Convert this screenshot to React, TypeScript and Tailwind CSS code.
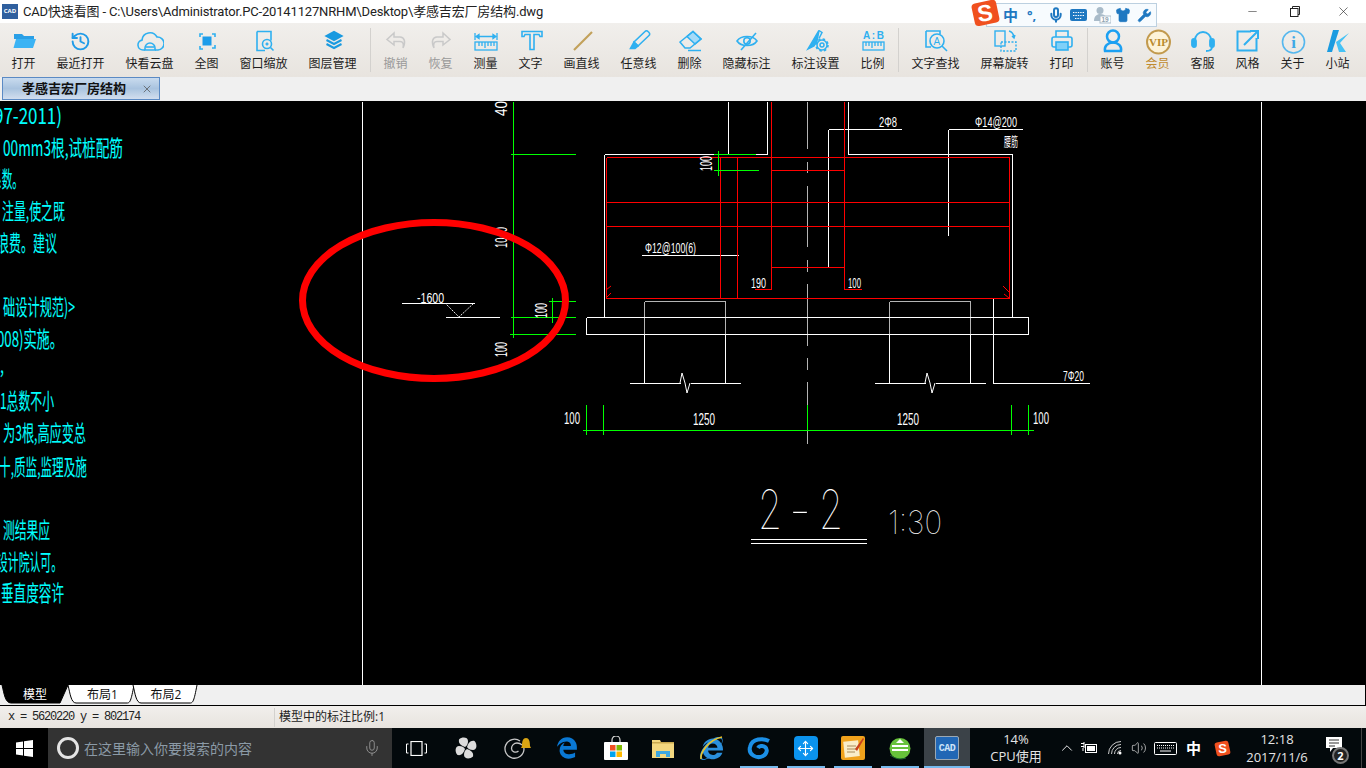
import React from "react";
import { History, Mic, Move, Shirt, Wrench, X, Minus, ChevronUp, Volume2 } from "lucide-react";
import { FaEdgeLegacy, FaInternetExplorer } from "react-icons/fa";

const BLUE = "#2fb0f0";

function Ic({ children, color = BLUE, width = 1.6 }: { children: React.ReactNode; color?: string; width?: number }) {
  return (
    <svg width={28} height={28} viewBox="0 0 28 28" fill="none" stroke={color} strokeWidth={width}>
      {children}
    </svg>
  );
}

const undoPath = "M12 6 L5 12.5 L12 18 V14.5 H18 C21 14.5 22 17 21 21 C24 15 22.5 10 18 10 H12 Z";
const ticks = "M7 19v-4M10 19v-4M13 21v-6M16 19v-4M19 19v-4M22 19v-4";

const tools: { label: string; w: number; color?: string; icon: React.ReactNode }[] = [
  {
    label: "打开",
    w: 45,
    icon: (
      <Ic>
        <path d="M4 7h8l2 2h10v3H4z" fill="#2a9fe6" stroke="none" />
        <path d="M6 12h20l-3 9H3.5z" fill="#3bb3f4" stroke="none" />
      </Ic>
    ),
  },
  {
    label: "最近打开",
    w: 69,
    icon: <div className="flex h-7 w-7 items-center justify-center"><History size={21} color="#1f9be8" strokeWidth={2.2} /></div>,
  },
  {
    label: "快看云盘",
    w: 69,
    icon: (
      <Ic>
        <path d="M9 23H7a5 5 0 0 1-1-9.9A8 8 0 0 1 21 10a6 6 0 0 1 1 13h-3" />
        <path d="M9 23v-2a5 5 0 0 1 10 0v2z" />
        <path d="M10 20h8" />
      </Ic>
    ),
  },
  {
    label: "全图",
    w: 45,
    icon: (
      <Ic>
        <rect x="9.5" y="9.5" width="9" height="9" fill="#1c9cea" stroke="none" />
        <path d="M7 10V7h3M19 7h3v3M22 18v3h-3M10 22H7v-3" />
      </Ic>
    ),
  },
  {
    label: "窗口缩放",
    w: 69,
    icon: (
      <Ic>
        <path d="M7 4.5h14v9M7 4.5v19h8" />
        <circle cx="17" cy="17" r="4.5" />
        <path d="M20.5 20.5l3 3M15.5 17h3M17 15.5v3" />
      </Ic>
    ),
  },
  {
    label: "图层管理",
    w: 69,
    icon: (
      <Ic color="#1a9ae0" width={2}>
        <path d="M15 5l7.5 4-7.5 4-7.5-4z" fill="#1a9ae0" />
        <path d="M7.5 13l7.5 4 7.5-4M7.5 17l7.5 4 7.5-4" />
      </Ic>
    ),
  },
  { label: "sep", w: 6, icon: null },
  {
    label: "撤销",
    w: 45,
    color: "#999",
    icon: (
      <Ic color="#c9c9c9" width={1.5}>
        <path d={undoPath} />
      </Ic>
    ),
  },
  {
    label: "恢复",
    w: 45,
    color: "#999",
    icon: (
      <Ic color="#c9c9c9" width={1.5}>
        <path d={undoPath} transform="translate(28) scale(-1 1)" />
      </Ic>
    ),
  },
  {
    label: "测量",
    w: 45,
    icon: (
      <Ic width={1.3}>
        <path d="M3 6v7M25 6v7M5 9.5h18" />
        <path d="M4 9.5l3-2v4zM24 9.5l-3-2v4z" fill={BLUE} />
        <rect x="3" y="15" width="22" height="8" />
        <path d={ticks} />
      </Ic>
    ),
  },
  {
    label: "文字",
    w: 45,
    icon: (
      <Ic>
        <path d="M5 4.5h20v5h-2l-1-2h-5v15h-4v-15H8l-1 2H5z" />
      </Ic>
    ),
  },
  {
    label: "画直线",
    w: 57,
    icon: (
      <Ic color="#c2a15a" width={2.2}>
        <path d="M6 23L24 5" />
      </Ic>
    ),
  },
  {
    label: "任意线",
    w: 57,
    icon: (
      <Ic>
        <path d="M20 4.5a2 2 0 0 1 3 0l1 1a2 2 0 0 1 0 3L13 19l-4-4z" />
        <path d="M9 15l4 4-3 2.5H5.5z" fill={BLUE} />
      </Ic>
    ),
  },
  {
    label: "删除",
    w: 45,
    icon: (
      <Ic width={1.5}>
        <path d="M17 4.5L25 12L19 17L11 9.5z" fill="#a5dbf8" />
        <path d="M17 4.5L25 12L14 21H9L4 15z" />
        <path d="M12 23.5H25" />
      </Ic>
    ),
  },
  {
    label: "隐藏标注",
    w: 69,
    icon: (
      <Ic>
        <path d="M4 14C8 8 20 8 24 14C20 20 8 20 4 14z" />
        <circle cx="14" cy="14" r="3.2" />
        <path d="M8 23L23 6" />
      </Ic>
    ),
  },
  {
    label: "标注设置",
    w: 69,
    icon: (
      <Ic width={1.5}>
        <path d="M17 3.5L6 22l6-3 3-5z" fill={BLUE} />
        <path d="M17 3.5l3 2-3 6" />
        <circle cx="20" cy="18" r="2" />
        <circle cx="20" cy="18" r="5" />
        <circle cx="20" cy="18" r="6" strokeWidth={1.6} strokeDasharray="2.5 2.2" />
      </Ic>
    ),
  },
  {
    label: "比例",
    w: 45,
    icon: (
      <Ic width={1.3}>
        <text x="4" y="12" fontSize="10" fontWeight="700" fill={BLUE} stroke="none" textLength="21" lengthAdjust="spacing" fontFamily="Liberation Sans">A:B</text>
        <rect x="4" y="15" width="21" height="8" />
        <path d={ticks} />
      </Ic>
    ),
  },
  { label: "sep", w: 6, icon: null },
  {
    label: "文字查找",
    w: 69,
    icon: (
      <Ic>
        <path d="M4 4h14v3M4 4v16h5" />
        <circle cx="15" cy="14" r="7" />
        <text x="11.5" y="17.5" fontSize="10" fill={BLUE} stroke="none" fontFamily="Liberation Sans">A</text>
        <path d="M20 19l5 5" />
      </Ic>
    ),
  },
  {
    label: "屏幕旋转",
    w: 69,
    icon: (
      <Ic width={1.4}>
        <rect x="4" y="4" width="10" height="15" />
        <rect x="10" y="15" width="15" height="9" strokeDasharray="2 1.5" />
        <path d="M18 4q4 1 5 6M21 9l2 2 1-3" />
      </Ic>
    ),
  },
  {
    label: "打印",
    w: 45,
    icon: (
      <Ic>
        <path d="M8 10V4h12v6" />
        <rect x="4" y="10" width="20" height="10" rx="2" />
        <rect x="8" y="15" width="12" height="8" fill="#7fd0f8" />
      </Ic>
    ),
  },
  { label: "sep", w: 6, icon: null },
  {
    label: "账号",
    w: 45,
    icon: (
      <Ic color="#1ca0f2" width={2.5}>
        <circle cx="14" cy="9.5" r="6" />
        <path d="M6 24c-1-5 3-8.500 8-8.500s9 3.500 8 8.500z" />
      </Ic>
    ),
  },
  {
    label: "会员",
    w: 45,
    color: "#c08a2e",
    icon: (
      <Ic color="#c29a4e" width={2}>
        <circle cx="14.500" cy="15" r="11.500" fill="#fdf3d8" />
        <text x="5" y="19" fontSize="11" fontWeight="700" fill="#b98a2d" stroke="none" textLength="19" lengthAdjust="spacingAndGlyphs" fontFamily="Liberation Serif">VIP</text>
      </Ic>
    ),
  },
  {
    label: "客服",
    w: 45,
    icon: (
      <Ic width={1.8}>
        <path d="M6 13a8 8 0 0 1 16 0" />
        <rect x="3" y="12" width="4" height="8" rx="2" fill={BLUE} />
        <rect x="21" y="12" width="4" height="8" rx="2" fill={BLUE} />
        <path d="M23 20q0 4-6 4" />
      </Ic>
    ),
  },
  {
    label: "风格",
    w: 45,
    icon: (
      <Ic width={2}>
        <path d="M17 4.500H3.500v19h19V11" />
        <path d="M10 18L24 4M16 4h8v8" />
      </Ic>
    ),
  },
  {
    label: "关于",
    w: 45,
    icon: (
      <Ic color="#55b7ee">
        <circle cx="14.500" cy="15" r="11" />
        <text x="14.500" y="21" textAnchor="middle" fontSize="17" fontWeight="700" fill="#3fa9e6" stroke="none" fontFamily="Liberation Serif">i</text>
      </Ic>
    ),
  },
  {
    label: "小站",
    w: 45,
    icon: (
      <Ic>
        <path d="M9 3h6L8 25H3z" fill="#1b9be0" stroke="none" />
        <path d="M12 15L25 6 16 16l6 9h-7z" fill="#45c2f5" stroke="none" />
      </Ic>
    ),
  },
];

function TitleBar() {
  return (
    <div className="relative flex h-[23px] items-center bg-white pl-[2px] text-[#222]">
      <div className="flex h-[15px] w-[16px] items-center justify-center bg-[#2f5f9e] text-[6px] font-bold text-white">CAD</div>
      <span className="ml-[5px] whitespace-nowrap font-['Roboto','Noto_Sans_CJK_SC',sans-serif] text-[13px] tracking-[-0.16px]">CAD快速看图 - C:\Users\Administrator.PC-20141127NRHM\Desktop\孝感吉宏厂房结构.dwg</span>
      <div className="ml-auto flex items-center text-[#222]">
        <div className="flex w-[45px] justify-center"><Minus size={13} strokeWidth={1} /></div>
        <div className="flex w-[46px] justify-center pr-[6px]">
          <svg width={10} height={11} viewBox="0 0 10 11" fill="none" stroke="#222">
            <rect x=".5" y="2.500" width="7.500" height="8" />
            <path d="M2.500 2.500V.5h7v8H8" />
          </svg>
        </div>
        <div className="flex w-[45px] justify-center pr-[1px]"><X size={15} strokeWidth={1} /></div>
      </div>
      <ImeBar />
    </div>
  );
}

function ImeBar() {
  return (
    <div className="absolute left-[971px] top-0 z-10 flex h-[28px] items-start">
      <svg width={29} height={27} viewBox="0 0 29 27" className="relative z-10">
        <rect x="2" y="1.500" width="25" height="23" rx="4" fill="#f0501e" transform="rotate(-12 14 13)" />
        <text x="14" y="21" textAnchor="middle" fontSize="23" fontWeight="700" fill="#fff" fontFamily="Liberation Sans" transform="rotate(-8 14 13)">S</text>
      </svg>
      <div className="ml-[-14px] mt-[3px] flex h-[24px] w-[171px] items-center border border-[#bcd0e0] bg-[#f7fbfe] pl-[16px] text-[#1f78c1]">
        <span className="w-[19px] text-[15px] font-bold leading-none">中</span>
        <span className="ml-[5px] w-[20px] text-[13px] font-bold leading-none">°,</span>
        <Mic size={16} strokeWidth={3} className="ml-[1px]" />
        <svg width={18} height={13} viewBox="0 0 18 13" className="ml-[6px]">
          <rect width="17" height="12" rx="2" fill="#1f78c1" />
          <path d="M3 3.500h11M3 6.500h11M5 9.500h7" stroke="#fff" strokeWidth="1.200" strokeDasharray="1.400 1" />
        </svg>
        <svg width={17} height={18} viewBox="0 0 17 18" className="ml-[6px]">
          <circle cx="6" cy="4.500" r="3.500" fill="#a9bbc9" />
          <path d="M0 15c0-5 3-7 6-7s5 1 6 3v4z" fill="#a9bbc9" />
          <rect x="6" y="10" width="11" height="7" fill="#fff" stroke="#a9bbc9" />
          <text x="7.500" y="16" fontSize="6.500" fontWeight="700" fill="#8fa3b2" fontFamily="Liberation Sans">19</text>
        </svg>
        <Shirt size={16} fill="#1f78c1" strokeWidth={1} className="ml-[4px]" />
        <Wrench size={15} fill="#1f78c1" strokeWidth={1} className="ml-[6px]" />
      </div>
    </div>
  );
}

function Toolbar() {
  return (
    <div className="flex h-[54px] bg-gradient-to-b from-[#f1efec] to-[#e8e4df] pl-px">
      {tools.map((t, i) =>
        t.label === "sep" ? (
          <div key={i} className="flex w-[6px] shrink-0 justify-center pt-[5px]">
            <div className="h-[44px] w-px bg-[#d3d1ce]" />
          </div>
        ) : (
          <div key={i} style={{ width: t.w, color: t.color }} className="flex shrink-0 flex-col items-center pt-[4px] text-[#1e1e1e]">
            {t.icon}
            <span className="mt-px whitespace-nowrap text-[12px] leading-[16px]">{t.label}</span>
          </div>
        )
      )}
    </div>
  );
}

function DocTabs() {
  return (
    <div className="flex h-[24px] bg-[#f0f0f0] pl-[2px]">
      <div className="flex h-[23px] w-[158px] items-center border border-[#5b8ac4] bg-gradient-to-b from-[#c9dbee] via-[#a9c3df] to-[#d2deee] pl-[19px]">
        <span className="text-[13px] font-bold text-[#111]">孝感吉宏厂房结构</span>
        <X size={12} color="#555" strokeWidth={1.5} className="ml-[15px]" />
      </div>
    </div>
  );
}

type Seg = [number, number, number, number];

const white: Seg[] = [
  [362, 101, 362, 685], [1261, 101, 1261, 685],
  [728, 101, 728, 154], [767, 101, 767, 154], [604, 154, 767, 154], [604, 154, 604, 317],
  [848, 101, 848, 154], [848, 154, 1012, 154], [1012, 154, 1012, 317],
  [586, 317, 1028, 317], [586, 334, 1028, 334], [586, 317, 586, 334], [1028, 317, 1028, 334],
  [401, 303, 474, 303], [445, 317, 499, 317],
  [641, 255, 738, 255], [828, 129, 901, 129], [828, 129, 828, 267], [948, 129, 1022, 129], [948, 129, 948, 235],
  [644, 334, 644, 383], [725, 334, 725, 383], [889, 334, 889, 383], [970, 334, 970, 383],
  [629, 383, 680, 383], [690, 383, 740, 383], [874, 383, 925, 383], [935, 383, 985, 383],
  [993, 298, 993, 383], [993, 383, 1089, 383],
  [750, 539, 866, 539], [750, 543, 866, 543],
];

const gray: Seg[] = [
  [644, 301, 725, 301], [644, 301, 644, 334], [725, 301, 725, 334],
  [889, 301, 970, 301], [889, 301, 889, 334], [970, 301, 970, 334],
  [807, 101, 807, 148], [807, 161, 807, 172], [807, 185, 807, 246], [807, 259, 807, 271],
  [807, 283, 807, 345], [807, 357, 807, 369], [807, 381, 807, 443],
];

const red: Seg[] = [
  [606, 157, 1009, 157], [606, 157, 606, 298], [1009, 157, 1009, 298], [606, 298, 1009, 298],
  [606, 202, 1009, 202], [606, 226, 1009, 226], [720, 157, 720, 298], [737, 157, 737, 298],
  [771, 101, 771, 289], [844, 101, 844, 289], [771, 170, 844, 170], [771, 267, 844, 267],
  [754, 289, 771, 289], [844, 289, 861, 289],
];

const green: Seg[] = [
  [513, 101, 513, 337], [510, 154, 575, 154], [510, 317, 575, 317], [509, 334, 575, 334],
  [552, 297, 552, 322], [548, 301, 575, 301], [713, 154, 755, 154], [713, 170, 758, 170], [718, 150, 718, 175],
  [582, 430, 1033, 430], [586, 404, 586, 434], [603, 404, 603, 434], [807, 404, 807, 430], [1011, 404, 1011, 434], [1028, 404, 1028, 434],
];

function Lines({ segs, color }: { segs: Seg[]; color: string }) {
  return (
    <g stroke={color} strokeWidth={1} shapeRendering="crispEdges">
      {segs.map((s, i) => (
        <line key={i} x1={s[0] + 0.5} y1={s[1] + 0.5} x2={s[2] + 0.5} y2={s[3] + 0.5} />
      ))}
    </g>
  );
}

// dimension text, squeezed like the CAD line font
function Dim({ x, y, len, size = 14, rot, children }: { x: number; y: number; len: number; size?: number; rot?: boolean; children: string }) {
  return (
    <text
      x={x}
      y={y}
      fontSize={size}
      fill="#fff"
      fontFamily="Liberation Sans"
      textLength={len}
      lengthAdjust="spacingAndGlyphs"
      transform={rot ? `rotate(-90 ${x} ${y})` : undefined}
    >
      {children}
    </text>
  );
}

const notes: [string, number, number, number][] = [
  ["97-2011)", -6, 124, 68],
  ["00mm3根,试桩配筋", 3, 156, 120],
  ["系数。", -9, 187, 32],
  ["注量,使之既", 2, 219, 63],
  ["浪费。建议", -3, 251, 60],
  ["础设计规范)>", 3, 315, 72],
  ["008)实施。", -3, 347, 66],
  [",", 0, 373, 4],
  ["1总数不小", 0, 409, 54],
  ["为3根,高应变总", 3, 441, 83],
  ["十,质监,监理及施", -1, 475, 88],
  ["测结果应", 3, 538, 47],
  ["设计院认可。", -3, 570, 65],
  ["垂直度容许", 1, 601, 63],
];

function Drawing() {
  return (
    <div className="h-[584px] bg-black">
      <svg className="block h-full w-full" viewBox="0 101 1366 584" fill="none">
        {notes.map(([t, x, y, len], i) => (
          <text key={i} x={x} y={y} fontSize="22" fill="#00ffff" stroke="#00ffff" strokeWidth="0.08" fontFamily="Noto Sans CJK SC" textLength={len} lengthAdjust="spacingAndGlyphs">
            {t}
          </text>
        ))}
        <Lines segs={gray} color="#b4b4b4" />
        <Lines segs={white} color="#fff" />
        <Lines segs={red} color="#ff0000" />
        <Lines segs={green} color="#00ff00" />
        <path d="M445 303L459 317L474 303" stroke="#fff" strokeDasharray="1.500 1" />
        <path d="M680 383L682 373L685 383L687 393L690 383M925 383L927 373L930 383L932 393L935 383" stroke="#fff" />
        <path d="M606 290l5-4M606 298l5-5M1009 292l-6-6M1009 298l-5-4" stroke="#ff0000" />
        <Dim x={417} y={303} len={27} size={14}>-1600</Dim>
        <Dim x={645} y={253} len={51} size={14}>Φ12@100(6)</Dim>
        <Dim x={751} y={288} len={15} size={15}>190</Dim>
        <Dim x={848} y={288} len={13} size={15}>100</Dim>
        <Dim x={879} y={127} len={18} size={14}>2Φ8</Dim>
        <Dim x={975} y={127} len={42} size={14}>Φ14@200</Dim>
        <text x={1004} y={146} fontSize="13" fill="#fff" fontFamily="Noto Sans CJK SC" textLength="14" lengthAdjust="spacingAndGlyphs">腰筋</text>
        <Dim x={1063} y={381} len={21} size={15}>7Φ20</Dim>
        <Dim x={564} y={424} len={16} size={17}>100</Dim>
        <Dim x={1033} y={424} len={16} size={17}>100</Dim>
        <Dim x={693} y={425} len={22} size={17}>1250</Dim>
        <Dim x={897} y={425} len={22} size={17}>1250</Dim>
        <Dim x={712} y={171} len={15} size={16} rot>100</Dim>
        <Dim x={507} y={116} len={15} size={16} rot>40</Dim>
        <Dim x={507} y={248} len={21} size={16} rot>1040</Dim>
        <Dim x={547} y={318} len={15} size={17} rot>100</Dim>
        <Dim x={507} y={357} len={15} size={17} rot>100</Dim>
        <g fill="#fff" fontFamily="Inter" fontWeight="100">
          <text x="758" y="529" fontSize="54" textLength="24" lengthAdjust="spacingAndGlyphs">2</text>
          <text x="789" y="529" fontSize="54" textLength="22" lengthAdjust="spacingAndGlyphs">-</text>
          <text x="819" y="529" fontSize="54" textLength="24" lengthAdjust="spacingAndGlyphs">2</text>
          <text x="888" y="534" fontSize="32" textLength="54" lengthAdjust="spacingAndGlyphs">1:30</text>
        </g>
        <ellipse cx="434" cy="300.500" rx="131.500" ry="78" stroke="#ff0000" strokeWidth="7" />
      </svg>
    </div>
  );
}

function SheetTab({ label, w, d, fill, color, text, ml, pl = 0 }: { label: string; w: number; d: string; fill: string; color: string; text: string; ml: number; pl?: number }) {
  return (
    <div style={{ width: w, marginLeft: ml, paddingLeft: pl }} className="relative flex h-[19px] items-center justify-center">
      <svg width={w} height={19} viewBox={`0 0 ${w} 19`} className="absolute left-0 top-0">
        <path d={d} fill={fill} stroke={color} />
      </svg>
      <span style={{ color: text }} className="relative text-[12px]">{label}</span>
    </div>
  );
}

function SheetTabs() {
  return (
    <div className="flex h-[21px] border-r border-b border-black bg-[#f0f0f0] pl-px">
      <SheetTab label="模型" w={68} ml={0} fill="#000" color="#000" text="#fff" d="M1 0C3 8 4 18 10 18H59L67 0Z" />
      <SheetTab label="布局1" w={68} ml={-2} pl={3} fill="#fff" color="#000" text="#111" d="M1 0C3 8 4 18 9 18H60C63 18 64 16 67 0" />
      <SheetTab label="布局2" w={66} ml={-3} pl={2} fill="#fff" color="#000" text="#111" d="M1 0C3 8 4 18 9 18H58C61 18 62 16 65 0" />
    </div>
  );
}

function StatusBar() {
  return (
    <div className="flex h-[22px] items-center bg-gradient-to-b from-[#f1efec] to-[#e8e4df] text-[#222]">
      <span className="w-[274px] whitespace-pre pl-[8px] font-['Liberation_Mono',monospace] text-[12px] tracking-[-1.2px]">x = 5620220 y = 802174</span>
      <div className="h-[19px] w-px bg-[#d3d1ce]" />
      <span className="pl-[4px] text-[12px]">模型中的标注比例:1</span>
    </div>
  );
}

function AppSlot({ w, on, children }: { w: number; on?: boolean; children: React.ReactNode }) {
  return (
    <div style={{ width: w }} className="flex h-full shrink-0 justify-center">
      <div className={`flex h-full w-[38px] items-center justify-center ${on ? "border-b-2 border-[#76b9ed] pt-[2px]" : ""}`}>{children}</div>
    </div>
  );
}

function Taskbar() {
  return (
    <div className="flex h-[40px] items-center bg-[#03090c] text-white">
      <div className="flex h-full w-[48px] items-center justify-center bg-black">
        <svg width={17} height={17} viewBox="0 0 17 17" fill="#fff">
          <path d="M0 2.500l7-1v6.500H0zM8 1.300l9-1.300v8H8zM0 9h7v6.500l-7-1zM8 9h9v8l-9-1.300z" />
        </svg>
      </div>
      <div className="flex h-full w-[344px] items-center bg-[#333] pl-[9px]">
        <div className="h-[22px] w-[22px] rounded-full border-[3px] border-[#e4e4e4]" />
        <span className="ml-[5px] text-[14px] text-[#8b9aa6]">在这里输入你要搜索的内容</span>
        <Mic size={18} color="#8f8f8f" strokeWidth={1.300} className="ml-[111px]" />
      </div>
      <AppSlot w={48}>
        <svg width={21} height={15} viewBox="0 0 21 15" fill="none" stroke="#fff">
          <rect x="5" y="0.500" width="11" height="14" strokeWidth="1.200" />
          <path d="M2.500 3H.5v9h2M18.500 3h2v9h-2" />
        </svg>
      </AppSlot>
      <AppSlot w={51}>
        <svg width={24} height={24} viewBox="0 0 24 24" fill="#dcdcdc">
          {[0, 90, 180, 270].map((r) => (
            <path key={r} transform={`rotate(${r} 12 12)`} d="M11 11C8 10 4 8 5 3.500C8 .5 14 1 14 5C14 8 13 10 11 11z" />
          ))}
        </svg>
      </AppSlot>
      <AppSlot w={51}>
        <svg width={30} height={28} viewBox="0 0 30 28" fill="none" stroke="#c8c8c8" strokeWidth="1.300">
          <path d="M18 7a9.500 9.500 0 1 0 4 8c0-3-3-6-7-6a5.500 5.500 0 0 0-5.500 5.500c0 3 4 5 7 2.500" />
          <path d="M20 12c0-5 1-8 4-8s4 3 4 8l1 2h-10z" fill="#d9a514" stroke="none" />
        </svg>
      </AppSlot>
      <AppSlot w={50}><FaEdgeLegacy size={22} color="#0a78d4" /></AppSlot>
      <AppSlot w={47}>
        <svg width={24} height={24} viewBox="0 0 24 24">
          <path d="M8 6V4a4 4 0 0 1 8 0v2" fill="none" stroke="#ddd" strokeWidth="1.200" />
          <rect y="6" width="24" height="18" rx="1" fill="#fff" />
          <rect x="6" y="9" width="5.500" height="5.500" fill="#f25022" />
          <rect x="12.500" y="9" width="5.500" height="5.500" fill="#7fba00" />
          <rect x="6" y="15.500" width="5.500" height="5.500" fill="#00a4ef" />
          <rect x="12.500" y="15.500" width="5.500" height="5.500" fill="#ffb900" />
        </svg>
      </AppSlot>
      <AppSlot w={48}>
        <svg width={22} height={19} viewBox="0 0 22 19">
          <path d="M0 1h8l1 2h13v16H0z" fill="#f3d77f" />
          <path d="M0 3h22v1.500H0z" fill="#c9a84f" />
          <path d="M4 18v-6h14v6h-4v-3H8v3z" fill="#3ea7e0" />
        </svg>
      </AppSlot>
      <AppSlot w={48}>
        <div className="relative flex items-center justify-center">
          <FaInternetExplorer size={23} color="#2a8fdc" />
          <svg width={26} height={26} viewBox="0 0 26 26" fill="none" stroke="#e8c22c" strokeWidth="1.600" className="absolute left-[-2px] top-[-2px]">
            <path d="M3 24C2 18 10 5 24 2" />
          </svg>
        </div>
      </AppSlot>
      <AppSlot w={47} on>
        <svg width={24} height={24} viewBox="0 0 24 24" fill="none">
          <path d="M22 5C16 2 5 2 3 11c-2 8 7 12 13 9 4-2 5-7 2-9-2-2-6-1-7 1" stroke="#1b8fe6" strokeWidth="4" />
        </svg>
      </AppSlot>
      <AppSlot w={47} on>
        <div className="flex h-[24px] w-[24px] items-center justify-center rounded-[4px] bg-[#0b93ee]">
          <Move size={17} color="#fff" strokeWidth={1.600} />
        </div>
      </AppSlot>
      <AppSlot w={47} on>
        <svg width={24} height={24} viewBox="0 0 24 24">
          <rect width="24" height="24" rx="2" fill="#f0a21c" />
          <rect x="3" y="5" width="15" height="16" fill="#f9edc9" transform="rotate(-6 10 13)" />
          <path d="M6 10h9M6 13h9M6 16h8" stroke="#a78a5a" />
          <path d="M14 13L22 2l1 1-7 12z" fill="#c8401c" />
        </svg>
      </AppSlot>
      <AppSlot w={48} on>
        <svg width={22} height={23} viewBox="0 0 22 23">
          <circle cx="11" cy="11.500" r="10.500" fill="#67c23a" />
          <path d="M3 9h16M3 13h16" stroke="#fff" strokeWidth="2" />
          <path d="M7 6l4-4 4 4z" fill="#fff" />
          <path d="M1 18q8 6 16 3" stroke="#1d6a2b" fill="none" />
        </svg>
      </AppSlot>
      <div className="flex h-full w-[46px] shrink-0 items-center justify-center border-b-2 border-[#76b9ed] bg-[#3b4248] pt-[2px]">
        <div className="flex h-[24px] w-[24px] items-center justify-center rounded-[2px] border border-[#9aa8b4] bg-[#2167b5] font-['Liberation_Mono',monospace] text-[10px] font-bold tracking-[-0.5px] text-[#cfe4f8]">CAD</div>
      </div>
      <div className="ml-[4px] flex w-[84px] shrink-0 flex-col items-center text-[13px] leading-[17px] text-[#e4e4e4]">
        <span>14%</span>
        <span>CPU使用</span>
      </div>
      <div className="flex w-[18px] justify-center"><ChevronUp size={20} strokeWidth={1.200} /></div>
      <div className="flex w-[27px] justify-center">
        <svg width={17} height={12} viewBox="0 0 17 12" fill="none" stroke="#fff">
          <rect x="4.500" y="2.500" width="11" height="8" />
          <rect x="6" y="4" width="8" height="5" fill="#fff" stroke="none" />
          <path d="M0 1.500h3M0 4.500h3M3 0v6M2 6v3" />
        </svg>
      </div>
      <div className="flex w-[24px] justify-center">
        <svg width={14} height={14} viewBox="0 0 14 14" fill="none" stroke="#ccc">
          <path d="M.5 13A12.500 12.500 0 0 1 13 .5M3.500 13A9.500 9.500 0 0 1 13 3.500M6.500 13A6.500 6.500 0 0 1 13 6.500M9.500 13A3.500 3.500 0 0 1 13 9.500" />
          <circle cx="12" cy="12" r="1.500" fill="#fff" stroke="none" />
        </svg>
      </div>
      <div className="flex w-[23px] justify-center"><Volume2 size={16} strokeWidth={1.100} color="#ddd" /></div>
      <div className="flex w-[30px] justify-center">
        <svg width={23} height={13} viewBox="0 0 23 13" fill="none" stroke="#fff">
          <rect x=".5" y=".5" width="22" height="12" rx="1" />
          <path d="M3 3.500h17M3 6h17" strokeDasharray="1 1" />
          <path d="M6 9h11" />
        </svg>
      </div>
      <div className="flex w-[27px] justify-center text-[15px] font-bold leading-none">中</div>
      <div className="flex w-[30px] justify-center">
        <svg width={17} height={17} viewBox="0 0 17 17">
          <rect x="1.500" y="1.500" width="14" height="14" rx="2.500" fill="#f0501e" transform="rotate(-12 8.500 8.500)" />
          <text x="8.500" y="13" textAnchor="middle" fontSize="13" fontWeight="700" fill="#fff" fontFamily="Liberation Sans">S</text>
        </svg>
      </div>
      <div className="flex w-[80px] shrink-0 flex-col items-center text-[13px] leading-[18px] text-[#e4e4e4]">
        <span>12:18</span>
        <span>2017/11/6</span>
      </div>
      <div className="relative flex h-full w-[34px] items-center justify-center">
        <svg width={17} height={17} viewBox="0 0 17 17" className="translate-y-[-3px]">
          <path d="M0 0h16v11H7l-3 4v-4H0z" fill="#fff" />
          <path d="M3 3h10M3 6h10M3 9h6" stroke="#333" />
        </svg>
        <div className="absolute left-[15px] top-[19px] flex h-[17px] w-[17px] items-center justify-center rounded-full border-2 border-[#777] bg-[#222] text-[11px] font-bold leading-none">2</div>
      </div>
      <div className="ml-[10px] h-full w-px bg-[#444]" />
    </div>
  );
}

export default function App() {
  return (
    <div className="flex h-[768px] w-[1366px] flex-col overflow-hidden font-['Open_Sans','Noto_Sans_CJK_SC',sans-serif]">
      <TitleBar />
      <Toolbar />
      <DocTabs />
      <Drawing />
      <SheetTabs />
      <StatusBar />
      <Taskbar />
    </div>
  );
}
